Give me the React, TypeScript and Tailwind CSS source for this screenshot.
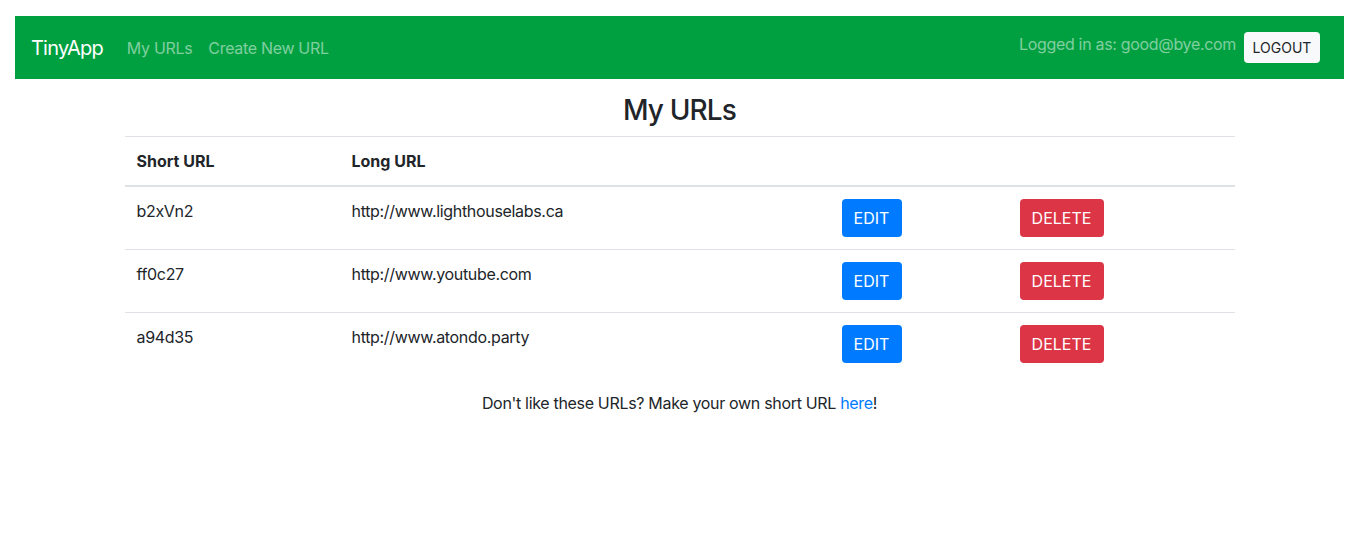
// TinyApp "My URLs" pagina — navbar, tabel met korte URLs en een voettekst.

const urls = [
  { short: 'b2xVn2', long: 'http://www.lighthouselabs.ca' },
  { short: 'ff0c27', long: 'http://www.youtube.com' },
  { short: 'a94d35', long: 'http://www.atondo.party' },
];

export default function App() {
  return (
    <div className="min-h-[560px] bg-white text-[#212529] font-['Inter','Liberation_Sans',sans-serif] text-base tracking-[-0.02em]">
      {/* Navbar */}
      <nav className="mx-[15px] mt-[16px] h-[63px] bg-[#00a040] flex items-center pl-4 pr-6">
        <span className="text-white text-[20px] tracking-[-0.04em] mr-4">TinyApp</span>
        <a className="px-2 text-white/50">My URLs</a>
        <a className="px-2 text-white/50">Create New URL</a>
        <div className="ml-auto flex items-center gap-2">
          <span className="text-white/50 pb-2">Logged in as: good@bye.com</span>
          <button className="h-[31px] w-[76px] bg-[#f8f9fa] rounded-[4px] text-[14px] tracking-normal text-[#212529]">
            LOGOUT
          </button>
        </div>
      </nav>

      {/* Content */}
      <main className="w-[1110px] mx-auto pt-[15px]">
        <h3 className="text-[28px] leading-[1.2] font-medium tracking-[-0.03em] text-center mb-2">My URLs</h3>
        <table className="w-full border-collapse">
          <thead>
            <tr className="border-t border-[#dee2e6] border-b-2">
              <th className="w-[215px] p-3 text-left font-bold tracking-normal">Short URL</th>
              <th className="w-[490px] p-3 text-left font-bold tracking-normal">Long URL</th>
              <th className="w-[178px] p-3"></th>
              <th className="p-3"></th>
            </tr>
          </thead>
          <tbody>
            {urls.map((u, i) => (
              <tr key={u.short} className={i > 0 ? 'border-t border-[#dee2e6]' : ''}>
                <td className="p-3 align-top">{u.short}</td>
                <td className="p-3 align-top">{u.long}</td>
                <td className="p-3 align-top">
                  <button className="h-[38px] w-[60px] rounded-[4px] bg-[#007bff] text-white tracking-normal">EDIT</button>
                </td>
                <td className="p-3 align-top">
                  <button className="h-[38px] w-[84px] rounded-[4px] bg-[#dc3545] text-white tracking-normal">DELETE</button>
                </td>
              </tr>
            ))}
          </tbody>
        </table>
        <p className="text-center mt-4">
          Don't like these URLs? Make your own short URL <a className="text-[#007bff]">here</a>!
        </p>
      </main>
    </div>
  );
}
